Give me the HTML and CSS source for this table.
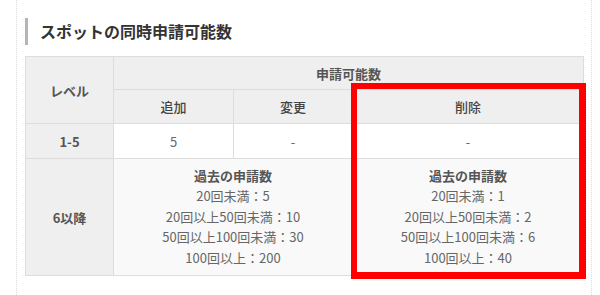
FILE: index.html
```html
<!DOCTYPE html>
<html lang="ja">
<head>
<meta charset="utf-8">
<link rel="stylesheet" href="styles.css">
</head>
<body>
<div class="page">
  <h2 class="heading">スポットの同時申請可能数</h2>
  <div class="table-wrap">
    <table class="spec">
      <colgroup>
        <col class="c-level"><col class="c-add"><col class="c-change"><col class="c-del">
      </colgroup>
      <thead>
        <tr class="r1">
          <th rowspan="2">レベル</th>
          <th colspan="3">申請可能数</th>
        </tr>
        <tr class="r2">
          <th>追加</th>
          <th>変更</th>
          <th>削除</th>
        </tr>
      </thead>
      <tbody>
        <tr class="r3">
          <th>1-5</th>
          <td class="plain">5</td>
          <td class="plain">-</td>
          <td class="plain">-</td>
        </tr>
        <tr class="r4">
          <th>6以降</th>
          <td colspan="2" class="soft">
            <b>過去の申請数</b><br>20回未満：5<br>20回以上50回未満：10<br>50回以上100回未満：30<br>100回以上：200
          </td>
          <td class="soft">
            <b>過去の申請数</b><br>20回未満：1<br>20回以上50回未満：2<br>50回以上100回未満：6<br>100回以上：40
          </td>
        </tr>
      </tbody>
    </table>
    <div class="highlight"></div>
  </div>
</div>
</body>
</html>
```
FILE: styles.css
```css
html, body {
  margin: 0;
  padding: 0;
  background: #fff;
}
body {
  font-family: "Noto Sans CJK JP", "Noto Sans", sans-serif;
  color: #555;
}
.page {
  margin-left: 16px;
  width: 576px;
  height: 295px;
  box-sizing: border-box;
  border-left: 1px dotted #dcdcdc;
  border-right: 1px dotted #dcdcdc;
  padding: 18px 9px 0 8px;
}
.heading {
  margin: 0 0 11px;
  height: 27px;
  border-left: 3px solid #b5b5b5;
  padding-left: 12px;
  font-size: 16px;
  font-weight: bold;
  color: #333;
  line-height: 27px;
}
.table-wrap {
  position: relative;
  width: 558px;
}
.spec {
  width: 558px;
  border-collapse: collapse;
  table-layout: fixed;
  font-size: 13px;
  text-align: center;
}
.c-level { width: 88px; }
.c-add { width: 120px; }
.c-change { width: 119px; }
.c-del { width: 231px; }
.spec th, .spec td {
  border: 1px solid #ddd;
  padding: 0;
  vertical-align: middle;
}
.spec th {
  background: #efefef;
  font-weight: bold;
  color: #555;
}
.r1 th { height: 32px; }
.r2 th { height: 33px; font-weight: 500; color: #444; }
.r3 th, .r3 td { height: 34px; }
.r4 th, .r4 td { height: 116px; }
.spec td.plain {
  background: #fff;
  color: #666;
}
.spec td.soft {
  background: #f9f9f9;
  color: #666;
  line-height: 20.5px;
}
.spec td.soft b {
  color: #555;
}
.highlight {
  position: absolute;
  left: 326px;
  top: 27px;
  width: 235px;
  height: 196px;
  box-sizing: border-box;
  border: 6px solid #ff0000;
  border-right-width: 7px;
  border-bottom-width: 7px;
  pointer-events: none;
}
```
